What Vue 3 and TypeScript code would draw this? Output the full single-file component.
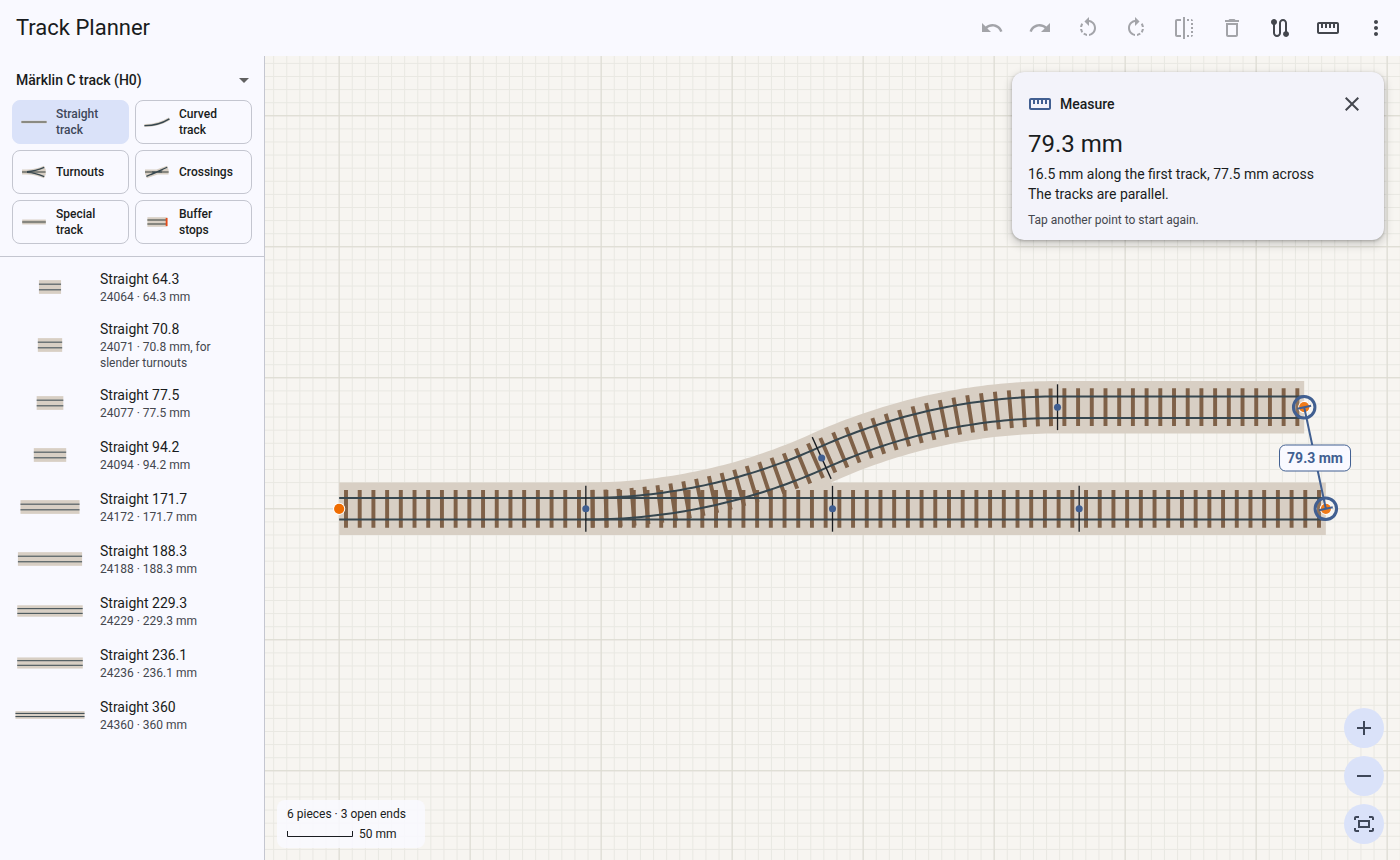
<script setup lang="ts">
import { computed, ref } from 'vue'

interface Tool { name: string; path: string; enabled: boolean }
interface Category { id: string; label: string }
interface Piece { name: string; article: string; length: number; note?: string }
interface Pose { x: number; y: number; angle: number }

const tools: Tool[] = [
  { name: 'Undo', enabled: false, path: 'M12.5 8c-2.65 0-5.05.99-6.9 2.6L2 7v9h9l-3.62-3.62c1.39-1.16 3.16-1.88 5.12-1.88 3.54 0 6.55 2.31 7.6 5.5l2.37-.78C21.08 11.03 17.15 8 12.5 8z' },
  { name: 'Redo', enabled: false, path: 'M18.4 10.6C16.55 8.99 14.15 8 11.5 8c-4.65 0-8.58 3.03-9.96 7.22L3.9 16c1.05-3.19 4.05-5.5 7.6-5.5 1.95 0 3.73.72 5.12 1.88L13 16h9V7l-3.6 3.6z' },
  { name: 'Rotate left', enabled: false, path: 'M7.11 8.53 5.7 7.11C4.8 8.27 4.24 9.61 4.07 11h2.02c.14-.87.49-1.72 1.02-2.47zM6.09 13H4.07c.17 1.39.72 2.73 1.62 3.89l1.41-1.42c-.52-.75-.87-1.59-1.01-2.47zm1.01 5.32c1.16.9 2.51 1.44 3.9 1.61V17.9c-.87-.15-1.71-.49-2.46-1.03L7.1 18.32zM13 4.07V1L8.45 5.55 13 10V6.09c2.84.48 5 2.94 5 5.91s-2.16 5.43-5 5.91v2.02c3.95-.49 7-3.85 7-7.93s-3.05-7.44-7-7.93z' },
  { name: 'Rotate right', enabled: false, path: 'M15.55 5.55 11 1v3.07C7.06 4.56 4 7.92 4 12s3.05 7.44 7 7.93v-2.02c-2.84-.48-5-2.94-5-5.91s2.16-5.43 5-5.91V10l4.55-4.45zM19.93 11c-.17-1.39-.72-2.73-1.62-3.89l-1.42 1.42c.54.75.88 1.6 1.02 2.47h2.02zM13 17.9v2.02c1.39-.17 2.74-.71 3.9-1.61l-1.44-1.44c-.75.54-1.59.89-2.46 1.03zm3.89-2.42 1.42 1.41c.9-1.16 1.45-2.5 1.62-3.89h-2.02c-.14.87-.48 1.72-1.02 2.48z' },
  { name: 'Flip', enabled: false, path: 'M15 21h2v-2h-2v2zm4-12h2V7h-2v2zM3 5v14c0 1.1.9 2 2 2h4v-2H5V5h4V3H5c-1.1 0-2 .9-2 2zm16-2v2h2c0-1.1-.9-2-2-2zm-8 20h2V1h-2v22zm8-6h2v-2h-2v2zM15 5h2V3h-2v2zm4 8h2v-2h-2v2zm0 8c1.1 0 2-.9 2-2h-2v2z' },
  { name: 'Delete', enabled: false, path: 'M6 19c0 1.1.9 2 2 2h8c1.1 0 2-.9 2-2V7H6v12zM8 9h8v10H8V9zm7.5-5-1-1h-5l-1 1H5v2h14V4z' },
  { name: 'Flex route', enabled: true, path: 'M19 15.18V7c0-2.21-1.79-4-4-4s-4 1.79-4 4v10c0 1.1-.9 2-2 2s-2-.9-2-2V8.82C8.16 8.4 9 7.3 9 6c0-1.66-1.34-3-3-3S3 4.34 3 6c0 1.3.84 2.4 2 2.82V17c0 2.21 1.79 4 4 4s4-1.79 4-4V7c0-1.1.9-2 2-2s2 .9 2 2v8.18A2.996 2.996 0 0 0 18 21c1.66 0 3-1.34 3-3 0-1.3-.84-2.4-2-2.82z' },
  { name: 'Measure', enabled: true, path: 'M21 6H3c-1.1 0-2 .9-2 2v8c0 1.1.9 2 2 2h18c1.1 0 2-.9 2-2V8c0-1.1-.9-2-2-2zm0 10H3V8h2v4h2V8h2v4h2V8h2v4h2V8h2v4h2V8h2v8z' },
  { name: 'More', enabled: true, path: 'M12 8c1.1 0 2-.9 2-2s-.9-2-2-2-2 .9-2 2 .9 2 2 2zm0 2c-1.1 0-2 .9-2 2s.9 2 2 2 2-.9 2-2-.9-2-2-2zm0 6c-1.1 0-2 .9-2 2s.9 2 2 2 2-.9 2-2-.9-2-2-2z' },
]
const rulerPath = tools[7].path

const zoomButtons = [
  { name: 'Zoom in', path: 'M19 13h-6v6h-2v-6H5v-2h6V5h2v6h6v2z' },
  { name: 'Zoom out', path: 'M19 13H5v-2h14v2z' },
  { name: 'Fit to view', path: 'M17 4h3c1.1 0 2 .9 2 2v2h-2V6h-3V4zM4 8V6h3V4H4c-1.1 0-2 .9-2 2v2h2zm16 8v2h-3v2h3c1.1 0 2-.9 2-2v-2h-2zM7 18H4v-2H2v2c0 1.1.9 2 2 2h3v-2zM18 8H6v8h12V8zm-2 6H8v-4h8v4z' },
]

const system = ref('c')
const categories: Category[] = [
  { id: 'straight', label: 'Straight track' },
  { id: 'curved', label: 'Curved track' },
  { id: 'turnouts', label: 'Turnouts' },
  { id: 'crossings', label: 'Crossings' },
  { id: 'special', label: 'Special track' },
  { id: 'buffers', label: 'Buffer stops' },
]
const selected = ref('straight')

const pieces: Piece[] = [
  { name: 'Straight 64.3', article: '24064', length: 64.3 },
  { name: 'Straight 70.8', article: '24071', length: 70.8, note: 'for slender turnouts' },
  { name: 'Straight 77.5', article: '24077', length: 77.5 },
  { name: 'Straight 94.2', article: '24094', length: 94.2 },
  { name: 'Straight 171.7', article: '24172', length: 171.7 },
  { name: 'Straight 188.3', article: '24188', length: 188.3 },
  { name: 'Straight 229.3', article: '24229', length: 229.3 },
  { name: 'Straight 236.1', article: '24236', length: 236.1 },
  { name: 'Straight 360', article: '24360', length: 360 },
]
function describe(p: Piece) {
  return `${p.article} · ${p.length} mm${p.note ? ', ' + p.note : ''}`
}

// Thumbnail scale in pixels per millimetre: long pieces shrink to the tile.
function thumb(length: number) {
  const s = Math.min(0.344, 72 / (length + (length > 300 ? 15 : 23)))
  const w = length * s
  return { x: 36 - w / 2, w, h: 40 * s, rail: 8.25 * s }
}

// Plan geometry, all in millimetres around the centre of the layout.
const SCALE = 1.31
const L = 188.3
const R = 437.5
const A = (24.3 * Math.PI) / 180
const X0 = -2 * L
const Y0 = R * (1 - Math.cos(A))
const DX = R * Math.sin(A)

function gridPath(step: number, extent: number) {
  let d = ''
  for (let x = X0 - Math.ceil(extent / step) * step; x < extent; x += step) d += `M${x} ${-extent}V${extent}`
  for (let y = Y0 - Math.ceil(extent / step) * step; y < extent; y += step) d += `M${-extent} ${y}H${extent}`
  return d
}
const minorGrid = gridPath(10, 1500)
const majorGrid = gridPath(100, 1500)

// turn > 0 bends up (left), turn < 0 bends back down, 0 is straight
function poseAt(start: Pose, turn: number, t: number): Pose {
  if (turn === 0) return { x: start.x + L * t * Math.cos(start.angle), y: start.y - L * t * Math.sin(start.angle), angle: start.angle }
  const a1 = start.angle + turn * A * t
  return {
    x: start.x + (R / turn) * (Math.sin(a1) - Math.sin(start.angle)),
    y: start.y + (R / turn) * (Math.cos(a1) - Math.cos(start.angle)),
    angle: a1,
  }
}
function side(p: Pose, o: number) {
  return `${(p.x - Math.sin(p.angle) * o).toFixed(3)} ${(p.y - Math.cos(p.angle) * o).toFixed(3)}`
}
function line(start: Pose, turn: number, o: number) {
  const n = turn === 0 ? 1 : 40
  const pts: string[] = []
  for (let i = 0; i <= n; i++) pts.push(side(poseAt(start, turn, i / n), o))
  return 'M' + pts.join('L')
}
function sleepers(start: Pose, turn: number) {
  let d = ''
  for (let i = 0; i < 18; i++) {
    const p = poseAt(start, turn, (i + 0.5) / 18)
    d += `M${side(p, -14.4)}L${side(p, 14.4)}`
  }
  return d
}

const upper: Pose = { x: X0 + L + 2 * DX, y: -Y0, angle: 0 }
const middle: Pose = { x: X0 + L + DX, y: 0, angle: A }
const at = (n: number): Pose => ({ x: X0 + n * L, y: Y0, angle: 0 })

const segments = computed(() =>
  [
    { start: at(0), turn: 0 },
    { start: at(2), turn: 0 },
    { start: at(3), turn: 0 },
    { start: at(1), turn: 0 },
    { start: at(1), turn: 1 },
    { start: middle, turn: -1 },
    { start: upper, turn: 0 },
  ].map((s) => ({
    bed: line(s.start, s.turn, 0),
    ties: sleepers(s.start, s.turn),
    rails: line(s.start, s.turn, 8.25) + line(s.start, s.turn, -8.25),
  })),
)
const joints = [at(1), at(2), at(3), middle, upper].map((p) => ({ ...p, d: `M${side(p, -17.5)}L${side(p, 17.5)}` }))
const endA = { x: upper.x + L, y: -Y0 }
const endB = { x: X0 + 4 * L, y: Y0 }
const openEnds = [{ x: X0, y: Y0 }, endA, endB]

const span = Math.hypot(endB.x - endA.x, endB.y - endA.y)
const nx = ((endB.y - endA.y) / span) * 5.4
const ny = (-(endB.x - endA.x) / span) * 5.4
const measurePath =
  `M${endA.x} ${endA.y}L${endB.x} ${endB.y}` +
  [endA, endB].map((e) => `M${e.x - nx} ${e.y - ny}L${e.x + nx} ${e.y + ny}`).join('')
const tagX = ((endA.x + endB.x) / 2) * SCALE
const measureOpen = ref(true)
</script>

<template>
  <div class="app">
    <header class="bar">
      <h1>Track Planner</h1>
      <div class="tools">
        <button v-for="t in tools" :key="t.name" type="button" class="tool" :aria-label="t.name" :disabled="!t.enabled">
          <svg viewBox="0 0 24 24" class="icon"><path :d="t.path" /></svg>
        </button>
      </div>
    </header>

    <div class="body">
      <aside class="side">
        <div class="system">
          <select v-model="system" aria-label="Track system">
            <option value="c">Märklin C track (H0)</option>
          </select>
          <svg class="arrow" viewBox="0 0 24 24" aria-hidden="true"><path d="m7 10 5 5 5-5z" /></svg>
        </div>

        <div class="categories">
          <button
            v-for="c in categories"
            :key="c.id"
            type="button"
            class="category"
            :class="{ active: selected === c.id }"
            :aria-pressed="selected === c.id"
            @click="selected = c.id"
          >
            <svg viewBox="0 0 28 20" class="glyph" aria-hidden="true">
              <g v-if="c.id === 'straight'">
                <path class="bed" stroke-width="2.6" d="M1.4 10h25.2" />
                <path class="soft" stroke-width="1.9" d="M1.4 10h25.2" />
              </g>
              <g v-else-if="c.id === 'curved'">
                <path class="bed" stroke-width="3" d="M1.4 13.6Q15 13.8 26.4 6.8" />
                <path class="rail" stroke-width="1.4" d="M1.4 13.6Q15 13.8 26.4 6.8" />
              </g>
              <g v-else-if="c.id === 'turnouts'">
                <path class="bed" stroke-width="5" d="M2 10h23.6M2 10h5Q16 10 25 6M7 10Q16 10 25 14" />
                <path class="soft" stroke-width="2" d="M2 10h23.6" />
                <path class="rail" stroke-width="1.2" d="M7 9.6Q15 9.4 24.2 5.4M7 10.4Q15 10.6 24.2 14.6" />
              </g>
              <g v-else-if="c.id === 'crossings'">
                <path class="bed" stroke-width="5" d="M2 10h23.6M3 13.8 25 6.2" />
                <path class="soft" stroke-width="2" d="M2 10h23.6" />
                <path class="rail" stroke-width="1.2" d="M3.4 14.4 24.2 5.2M8 12.8 20 7.4M9 10h10" />
              </g>
              <g v-else-if="c.id === 'special'">
                <path class="bed" stroke-width="5" d="M2.2 10h23.6" />
                <path class="soft" stroke-width="2.2" d="M2.2 10h23.6" />
              </g>
              <g v-else>
                <path class="bed" stroke-width="9.6" d="M4.4 10h20" />
                <path class="soft" stroke-width="1.8" d="M4.4 8h19M4.4 12h19" />
                <path class="stop" stroke-width="1.8" d="M23.6 6v8" />
              </g>
            </svg>
            <span>{{ c.label }}</span>
          </button>
        </div>

        <ul class="pieces">
          <li v-for="p in pieces" :key="p.article">
            <button type="button" class="piece">
              <svg class="thumb" viewBox="0 0 72 20" aria-hidden="true">
                <rect class="thumb-bed" :x="thumb(p.length).x" :y="10 - thumb(p.length).h / 2" :width="thumb(p.length).w" :height="thumb(p.length).h" />
                <path
                  class="rail"
                  stroke-width="1"
                  :d="`M${thumb(p.length).x} ${10 - thumb(p.length).rail}h${thumb(p.length).w}M${thumb(p.length).x} ${10 + thumb(p.length).rail}h${thumb(p.length).w}`"
                />
              </svg>
              <span class="piece-text">
                <span class="piece-name">{{ p.name }}</span>
                <span class="piece-note">{{ describe(p) }}</span>
              </span>
            </button>
          </li>
        </ul>
      </aside>

      <main class="canvas">
        <svg class="plan" role="img" aria-label="Track plan">
          <svg x="50%" y="50%" overflow="visible">
            <g :transform="`scale(${SCALE})`" fill="none">
              <path class="grid minor" :d="minorGrid" />
              <path class="grid major" :d="majorGrid" />
              <path v-for="(s, i) in segments" :key="`b${i}`" class="plan-bed" :d="s.bed" />
              <path v-for="(s, i) in segments" :key="`t${i}`" class="plan-ties" :d="s.ties" />
              <path v-for="(s, i) in segments" :key="`r${i}`" class="plan-rails" :d="s.rails" />
              <g v-for="(j, i) in joints" :key="`j${i}`">
                <path class="joint-line" :d="j.d" />
                <circle class="joint-dot" :cx="j.x" :cy="j.y" r="2.7" />
              </g>
              <circle v-for="(e, i) in openEnds" :key="`e${i}`" class="open-end" :cx="e.x" :cy="e.y" r="3.9" />
              <circle v-for="(e, i) in [endA, endB]" :key="`m${i}`" class="ring" :cx="e.x" :cy="e.y" r="8.2" />
              <path class="measure-line" :d="measurePath" />
            </g>
            <g :transform="`translate(${tagX} 0)`">
              <rect class="tag" x="-35.5" y="-13" width="71" height="26" rx="6" />
              <text class="tag-text" text-anchor="middle" y="5">79.3 mm</text>
            </g>
          </svg>
        </svg>

        <section v-if="measureOpen" class="panel" aria-label="Measure">
          <div class="panel-head">
            <svg viewBox="0 0 24 24" class="icon primary"><path :d="rulerPath" /></svg>
            <h2>Measure</h2>
            <button type="button" class="tool" aria-label="Close" @click="measureOpen = false">
              <svg viewBox="0 0 24 24" class="icon"><path d="M19 6.41 17.59 5 12 10.59 6.41 5 5 6.41 10.59 12 5 17.59 6.41 19 12 13.41 17.59 19 19 17.59 13.41 12z" /></svg>
            </button>
          </div>
          <p class="distance">79.3 mm</p>
          <p class="detail">16.5 mm along the first track, 77.5 mm across</p>
          <p class="detail">The tracks are parallel.</p>
          <p class="hint">Tap another point to start again.</p>
        </section>

        <div class="status">
          <span>6 pieces · 3 open ends</span>
          <div class="scale">
            <svg viewBox="0 0 66 6" class="scale-bar" aria-hidden="true"><path d="M.5 0v5.5h65V0" /></svg>
            <span>50 mm</span>
          </div>
        </div>

        <div class="zoom">
          <button v-for="z in zoomButtons" :key="z.name" type="button" :aria-label="z.name">
            <svg viewBox="0 0 24 24" class="icon"><path :d="z.path" /></svg>
          </button>
        </div>
      </main>
    </div>
  </div>
</template>

<style>
body {
  margin: 0;
}
</style>

<style scoped>
.app {
  display: flex;
  flex-direction: column;
  height: 100vh;
  background: #f9f9ff;
  color: #191c20;
  font-family: Roboto, "Noto Sans", sans-serif;
  font-size: 14px;
  line-height: 20px;
}
h1,
h2,
p,
ul {
  margin: 0;
  padding: 0;
  font-weight: 400;
}
button,
select {
  font: inherit;
  color: inherit;
  border: 0;
  background: none;
  padding: 0;
  cursor: pointer;
}
.bar {
  display: flex;
  align-items: center;
  justify-content: space-between;
  height: 56px;
  flex: none;
  padding-left: 16px;
}
h1 {
  font-size: 22px;
  line-height: 28px;
}
.tools {
  display: flex;
}
.tool {
  display: grid;
  place-items: center;
  width: 48px;
  height: 48px;
  color: #44474e;
}
.tool:disabled {
  color: #191c20;
  opacity: 0.38;
  cursor: default;
}
.icon {
  display: block;
  width: 24px;
  height: 24px;
  fill: currentColor;
}
.primary {
  color: #415f91;
}
.body {
  display: flex;
  flex: 1;
  min-height: 0;
}
.side {
  box-sizing: border-box;
  width: 265px;
  flex: none;
  padding-top: 4px;
  border-right: 1px solid #c4c6d0;
  overflow: auto;
}
.system {
  display: grid;
  align-items: center;
  padding: 0 8px 0 16px;
}
.system > * {
  grid-area: 1 / 1;
}
.system select {
  appearance: none;
  height: 40px;
  font-weight: 500;
}
.arrow {
  justify-self: end;
  width: 24px;
  height: 24px;
  fill: #616161;
  pointer-events: none;
}
.categories {
  display: grid;
  grid-template-columns: 1fr 1fr;
  gap: 6px;
  padding: 0 12px 12px;
  border-bottom: 1px solid #c4c6d0;
}
.category {
  box-sizing: border-box;
  display: flex;
  align-items: center;
  gap: 8px;
  min-height: 44px;
  padding: 5px 11px 5px 7px;
  border: 1px solid #c4c6d0;
  border-radius: 8px;
  font-size: 12px;
  font-weight: 500;
  line-height: 16px;
  text-align: left;
}
.category.active {
  background: #dae2f9;
  border-color: #dae2f9;
  color: #3e4759;
}
.glyph {
  width: 28px;
  height: 20px;
  flex: none;
  fill: none;
}
.bed {
  stroke: #d8cfc4;
}
.rail {
  fill: none;
  stroke: #37474f;
}
.soft {
  stroke: #86867f;
}
.stop {
  stroke: #e64a19;
}
.pieces {
  list-style: none;
  padding: 4px 0;
}
.piece {
  box-sizing: border-box;
  display: flex;
  align-items: center;
  gap: 14px;
  width: 100%;
  min-height: 52px;
  padding: 6px 16px 6px 14px;
  text-align: left;
}
.thumb {
  width: 72px;
  height: 20px;
  flex: none;
}
.thumb-bed {
  fill: #d8cfc4;
}
.piece-text {
  display: flex;
  flex-direction: column;
}
.piece-note {
  font-size: 12px;
  line-height: 16px;
  color: #44474e;
}
.canvas {
  position: relative;
  flex: 1;
  min-width: 0;
  overflow: hidden;
  background: #f7f5f1;
}
.plan {
  display: block;
  width: 100%;
  height: 100%;
}
.grid {
  vector-effect: non-scaling-stroke;
}
.minor {
  stroke: #e9e8e2;
  stroke-width: 1px;
}
.major {
  stroke: #dcdad1;
  stroke-width: 1px;
}
.plan-bed {
  stroke: #d8cfc4;
  stroke-width: 40px;
}
.plan-ties {
  stroke: #7f6148;
  stroke-width: 3px;
}
.plan-rails {
  stroke: #37474f;
  stroke-width: 2px;
  vector-effect: non-scaling-stroke;
}
.joint-line {
  stroke: #191c20;
  stroke-width: 1px;
}
.joint-dot {
  fill: #415f91;
}
.open-end {
  fill: #ef6c00;
  stroke: #ffffff;
  stroke-width: 2px;
  paint-order: stroke;
  vector-effect: non-scaling-stroke;
}
.ring {
  fill: rgba(255, 255, 255, 0.1);
  stroke: #415f91;
  stroke-width: 3px;
  vector-effect: non-scaling-stroke;
}
.measure-line {
  stroke: #415f91;
  stroke-width: 2px;
  vector-effect: non-scaling-stroke;
}
.tag {
  fill: #f9f9ff;
  stroke: #415f91;
  stroke-width: 1px;
}
.tag-text {
  fill: #415f91;
  font-size: 14px;
  font-weight: 700;
}
.panel {
  position: absolute;
  top: 16px;
  right: 16px;
  box-sizing: border-box;
  width: 372px;
  max-width: calc(100% - 32px);
  padding: 8px 8px 12px 16px;
  border-radius: 12px;
  background: #f3f3fa;
  box-shadow: 0 1px 3px rgba(0, 0, 0, 0.25), 0 4px 8px 2px rgba(0, 0, 0, 0.14);
}
.panel-head {
  display: flex;
  align-items: center;
  gap: 8px;
}
h2 {
  flex: 1;
  font-size: 14px;
  font-weight: 500;
}
.distance {
  font-size: 24px;
  line-height: 32px;
  margin-bottom: 4px;
}
.hint {
  margin-top: 8px;
  font-size: 12px;
  line-height: 16px;
  color: #44474e;
}
.status {
  position: absolute;
  left: 12px;
  bottom: 12px;
  box-sizing: border-box;
  display: flex;
  flex-direction: column;
  gap: 4px;
  min-width: 148px;
  padding: 6px 10px;
  border-radius: 8px;
  background: rgba(249, 249, 255, 0.85);
  font-size: 12px;
  line-height: 16px;
}
.scale {
  display: flex;
  align-items: center;
  gap: 6px;
}
.scale-bar {
  width: 66px;
  height: 6px;
  fill: none;
  stroke: #191c20;
}
.zoom {
  position: absolute;
  right: 16px;
  bottom: 16px;
  display: flex;
  flex-direction: column;
  gap: 8px;
}
.zoom button {
  display: grid;
  place-items: center;
  width: 40px;
  height: 40px;
  border-radius: 50%;
  background: #dae2f9;
  color: #3e4759;
}
</style>
